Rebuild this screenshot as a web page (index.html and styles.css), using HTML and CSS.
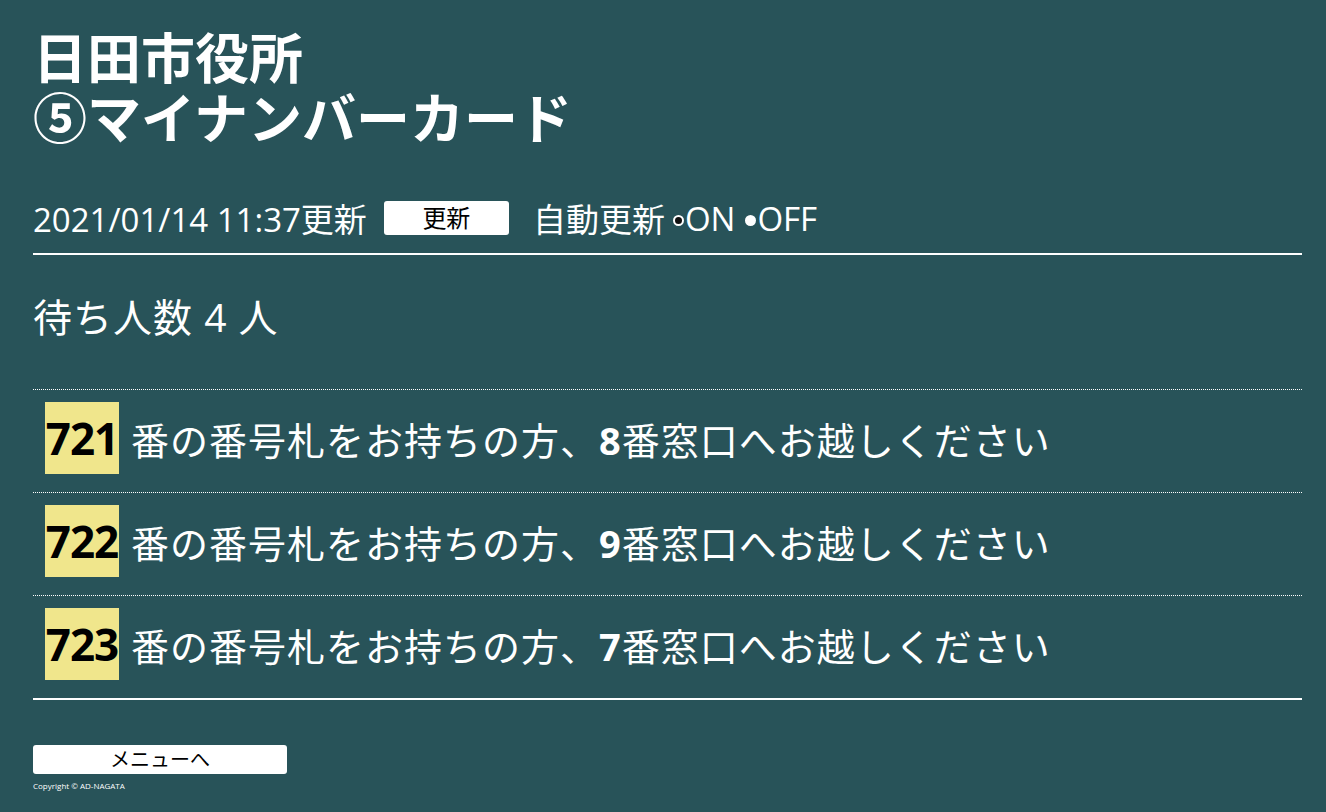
FILE: index.html
```html
<!DOCTYPE html>
<html lang="ja">
<head>
<meta charset="utf-8">
<title>日田市役所 ⑤マイナンバーカード</title>
<link rel="stylesheet" href="styles.css">
</head>
<body>
<div class="page">
  <h1 class="title"><span class="title-line">日田市役所</span><span class="title-line">⑤マイナンバーカード</span></h1>
  <div class="status">
    <span class="stamp">2021/01/14 11:37更新</span>
    <button class="btn btn-update">更新</button>
    <span class="auto">自動更新</span>
    <label class="radio"><span class="dot dot-on"></span>ON</label>
    <label class="radio"><span class="dot"></span>OFF</label>
  </div>
  <div class="waiting">待ち人数 4 人</div>
  <div class="calls">
    <div class="call"><span class="num">721</span><span class="msg">番の番号札をお持ちの方、<b>8</b>番窓口へお越しください</span></div>
    <div class="call"><span class="num">722</span><span class="msg">番の番号札をお持ちの方、<b>9</b>番窓口へお越しください</span></div>
    <div class="call"><span class="num">723</span><span class="msg">番の番号札をお持ちの方、<b>7</b>番窓口へお越しください</span></div>
  </div>
  <button class="btn btn-menu">メニューへ</button>
  <div class="copy">Copyright © AD-NAGATA</div>
</div>
</body>
</html>
```
FILE: styles.css
```css
html, body {
  margin: 0;
  padding: 0;
  background: #285359;
}
body {
  font-family: "Open Sans", "Noto Sans CJK JP", sans-serif;
  color: #ffffff;
}
.page {
  padding: 28px 24px 0 33px;
}
.title {
  margin: 0;
  font-size: 54px;
  line-height: 60px;
  font-weight: 700;
}
.title-line {
  display: block;
  height: 60px;
}
.status {
  display: flex;
  align-items: center;
  margin-top: 50px;
  height: 40px;
  font-size: 33px;
  padding-bottom: 15px;
  border-bottom: 2px solid #ffffff;
}
.btn {
  background: #ffffff;
  color: #000000;
  border: none;
  border-radius: 3px;
  font-family: "Open Sans", "Noto Sans CJK JP", sans-serif;
  padding: 0;
}
.btn-update {
  width: 125px;
  height: 34px;
  font-size: 24px;
  line-height: 34px;
  margin-left: 17px;
  margin-right: 24px;
}
.auto {
  margin-right: 8px;
}
.radio {
  display: inline-flex;
  align-items: center;
  margin-right: 10px;
}
.dot {
  width: 11px;
  height: 11px;
  border-radius: 50%;
  background: #ffffff;
  margin-right: 1px;
  margin-top: 5px;
  box-sizing: border-box;
}
.dot-on {
  border: 2px solid #ffffff;
  background: #111111;
}
.waiting {
  font-size: 39px;
  line-height: 40px;
  margin-top: 42px;
  letter-spacing: 1px;
}
.calls {
  margin-top: 52px;
  border-bottom: 2px solid #ffffff;
}
.call {
  display: flex;
  align-items: center;
  border-top: 1px dotted #ffffff;
  padding: 12px 0 18px 12px;
}
.num {
  background: #f0e68c;
  color: #000000;
  font-weight: 700;
  font-size: 44px;
  width: 74px;
  height: 72px;
  line-height: 72px;
  text-align: center;
  letter-spacing: -1px;
  overflow: hidden;
  white-space: nowrap;
}
.msg {
  font-size: 38px;
  margin-left: 12px;
  letter-spacing: 1px;
}
.msg b {
  font-weight: 700;
}
.btn-menu {
  display: block;
  margin-top: 45px;
  width: 254px;
  height: 29px;
  font-size: 20px;
  line-height: 29px;
}
.copy {
  font-size: 8px;
  margin-top: 6px;
}
```
